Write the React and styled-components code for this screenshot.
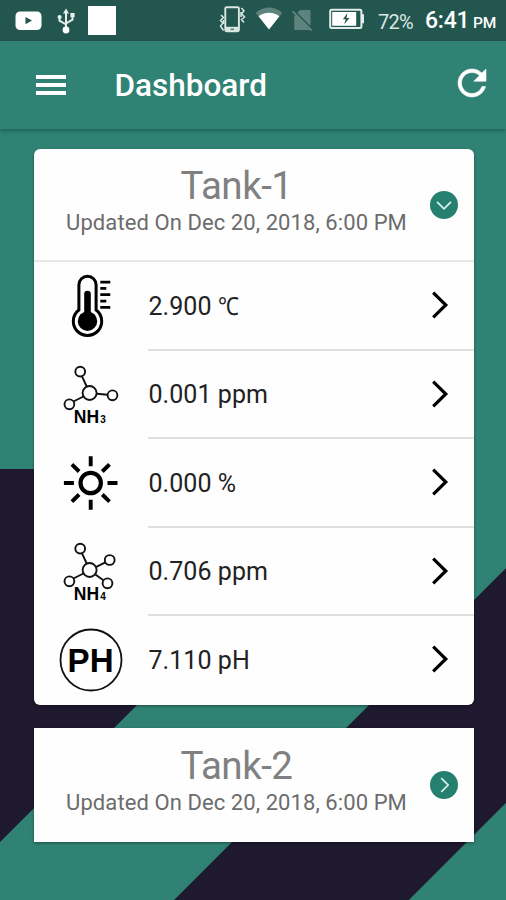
import React from "react";
import styled, { createGlobalStyle } from "styled-components";

const tanks = [
  {
    name: "Tank-1",
    updated: "Updated On Dec 20, 2018, 6:00 PM",
    open: true,
    readings: [
      { icon: "temp", value: "2.900", unit: "℃" },
      { icon: "nh3", value: "0.001", unit: "ppm" },
      { icon: "light", value: "0.000", unit: "%" },
      { icon: "nh4", value: "0.706", unit: "ppm" },
      { icon: "ph", value: "7.110", unit: "pH" },
    ],
  },
  {
    name: "Tank-2",
    updated: "Updated On Dec 20, 2018, 6:00 PM",
    open: false,
    readings: [],
  },
];

function App() {
  return (
    <>
      <GlobalStyle />
      <Screen>
        <StatusBar />
        <AppBar>
          <MenuButton aria-label="Menu">
            <span />
            <span />
            <span />
          </MenuButton>
          <Heading>Dashboard</Heading>
          <RefreshButton aria-label="Refresh">
            <svg width="42" height="42" viewBox="0 0 24 24">
              <path
                fill="#fff"
                stroke="#fff"
                strokeWidth="0.3"
                d="M17.65 6.35C16.2 4.9 14.21 4 12 4c-4.42 0-7.99 3.58-7.99 8s3.57 8 7.99 8c3.73 0 6.84-2.55 7.73-6h-2.08c-.82 2.33-3.04 4-5.65 4-3.31 0-6-2.69-6-6s2.69-6 6-6c1.66 0 3.14.69 4.22 1.78L13 11h7V4l-2.35 2.35z"
              />
            </svg>
          </RefreshButton>
        </AppBar>
        <TankList>
          {tanks.map((tank) => (
            <Tank key={tank.name} tank={tank} />
          ))}
        </TankList>
      </Screen>
    </>
  );
}

export default App;

const Tank = ({ tank }) => (
  <Card $open={tank.open}>
    <CardHeader $open={tank.open}>
      <Titles>
        <TankName>{tank.name}</TankName>
        <Updated>{tank.updated}</Updated>
      </Titles>
      <Toggle aria-label="Toggle">
        <svg width="28" height="28" viewBox="0 0 28 28" fill="none" stroke="#d9f3ec" strokeWidth="1.7">
          {tank.open ? <path d="M7 10.8l7 7 7-7" /> : <path d="M11.3 7.2l6.8 6.8-6.8 6.8" />}
        </svg>
      </Toggle>
    </CardHeader>
    {tank.open &&
      tank.readings.map((reading) => (
        <Row key={reading.icon}>
          <IconCell>
            <ReadingIcon name={reading.icon} />
          </IconCell>
          <RowBody>
            <Value>
              {reading.value} <Unit $narrow={reading.unit === "℃"}>{reading.unit}</Unit>
            </Value>
            <svg width="20" height="30" viewBox="0 0 20 30" fill="none" stroke="#000" strokeWidth="3.2">
              <path d="M3.2 2.6L15.8 15 3.2 27.4" />
            </svg>
          </RowBody>
        </Row>
      ))}
  </Card>
);

const StatusBar = () => (
  <Status>
    {/* notifications */}
    <YoutubeIcon width="27" height="20" viewBox="0 0 27 20">
      <rect x="0.5" y="0.5" width="26" height="18.5" rx="4.5" fill="#fff" />
      <path d="M10.5 6l6.5 3.6-6.5 3.6z" fill="#22564e" />
    </YoutubeIcon>
    <UsbIcon width="18" height="26" viewBox="0 0 18 26" fill="none" stroke="#e6efed" strokeWidth="2">
      <path d="M9 5v17M2.5 9.5v3.2L9 16.5M15.5 7v4.7L9 15.5" />
      <path d="M9 0.5l3 5H6z" fill="#e6efed" stroke="none" />
      <circle cx="9" cy="22" r="3.4" fill="#fff" stroke="none" />
      <circle cx="2.6" cy="9" r="2.1" fill="#e6efed" stroke="none" />
      <rect x="13.4" y="5" width="4.2" height="4.2" fill="#e6efed" stroke="none" />
    </UsbIcon>
    <WhiteSquare />
    <Spacer />
    {/* system */}
    <VibrateIcon width="27" height="27" viewBox="0 0 27 27" fill="none" stroke="#dbe7e4">
      <rect x="6.3" y="1.3" width="13.6" height="24" rx="1.2" strokeWidth="1.9" />
      <path d="M6.5 22.8h13.2" strokeWidth="4" />
      <path d="M11.5 23.2h3.5" stroke="#22564e" strokeWidth="1" />
      <path d="M2 9l2.5 2.5L1.5 14.5 4 17l-2.5 3 3 4.5M4.5 14v4M22.5 2l2.5 3-2.5 2.5L25.5 11l-3 2.5 2.5 3M22 6v5" strokeWidth="1.5" />
    </VibrateIcon>
    <WifiIcon width="28" height="23" viewBox="0 0 28 23">
      <path d="M14 22.5L0.8 6C4.5 2.6 9 0.6 14 0.6s9.5 2 13.2 5.4z" fill="#5d837c" />
      <path d="M14 22.5L3.6 9.3C6.5 7 10 5.7 14 5.7s7.5 1.3 10.4 3.6z" fill="#fff" />
    </WifiIcon>
    <SimIcon width="22" height="24" viewBox="0 0 22 24">
      <path d="M8 2h9.2c.8 0 1.3.5 1.3 1.3V22H3.5c-.8 0-1.3-.5-1.3-1.3V8z" fill="#5d837c" />
      <path d="M2 3l18 18" stroke="#22564e" strokeWidth="2" />
      <path d="M0.5 3.2l19.3 19.3" stroke="#5d837c" strokeWidth="1.8" />
    </SimIcon>
    <BatteryIcon width="36" height="22" viewBox="0 0 36 22">
      <rect x="1.2" y="1.7" width="31.2" height="18.2" rx="1.5" fill="none" stroke="#e3ecea" strokeWidth="2" />
      <path d="M33 6.2h2v9h-2z" fill="#e3ecea" />
      <rect x="3.2" y="4" width="24" height="13.8" fill="#fff" />
      <path d="M18.5 5l-4.6 6.3h2.8l-1.5 5 5.3-6.4h-3z" fill="#22564e" />
    </BatteryIcon>
    <Percent>72%</Percent>
    <Clock>
      <span>6:41</span>
      <small>PM</small>
    </Clock>
  </Status>
);

const ReadingIcon = ({ name }) => {
  switch (name) {
    case "temp":
      return (
        <svg width="64" height="64" viewBox="0 0 64 64">
          <path
            d="M19.9 36V10.8a8.6 8.6 0 0 1 17.2 0V36a14.2 14.2 0 1 1-17.2 0z"
            fill="none"
            stroke="#000"
            strokeWidth="3"
          />
          <path d="M28.5 20v27" stroke="#000" strokeWidth="6.6" strokeLinecap="round" />
          <circle cx="28.5" cy="47.2" r="9.7" />
          <path d="M41.3 8.2h10M41.3 14.3h6M41.3 20.6h10M41.3 27.2h6M41.3 33.4h10" stroke="#000" strokeWidth="2.8" />
        </svg>
      );
    case "nh3":
    case "nh4":
      return (
        <svg width="66" height="70" viewBox="0 -3 66 70">
          <g fill="none" stroke="#111" strokeWidth="1.9">
            <circle cx="30.6" cy="31" r="7" />
            <circle cx="21.2" cy="9.6" r="4.9" />
            <circle cx="10.4" cy="42.3" r="4.9" />
            <path d="M23 14.3l4.7 10.2M14.4 39.5l10-5" />
            {name === "nh3" ? (
              <>
                <circle cx="53.5" cy="33.3" r="4.9" />
                <path d="M37.6 31.8l11.1.9" />
              </>
            ) : (
              <>
                <circle cx="50.7" cy="21" r="4.9" />
                <circle cx="48.5" cy="44.3" r="4.9" />
                <path d="M36.8 28.1l9.5-4.8M36.4 35.5l8 5.8" />
              </>
            )}
          </g>
          <text
            x="14.8"
            y="60.8"
            fontFamily="Liberation Sans, sans-serif"
            fontWeight="700"
            fontSize="17.5"
          >
            NH
          </text>
          <text x="41.2" y="61.3" fontFamily="Liberation Sans, sans-serif" fontWeight="700" fontSize="10">
            {name === "nh3" ? "3" : "4"}
          </text>
        </svg>
      );
    case "light":
      return (
        <svg width="64" height="64" viewBox="0 -1 64 64" fill="none" stroke="#000">
          <circle cx="31.7" cy="32" r="10.2" strokeWidth="4.2" />
          <path
            d="M31.7 5.2v10M31.7 48.8v10M4.9 32h10M48.5 32h10M12.9 13.3l7.2 7.2M43.3 43.5l7.2 7.2M12.9 50.7l7.2-7.2M43.3 20.5l7.2-7.2"
            strokeWidth="3.9"
          />
        </svg>
      );
    default:
      return (
        <svg width="64" height="66" viewBox="0 -2 64 66">
          <circle cx="32" cy="32" r="30.5" fill="none" stroke="#111" strokeWidth="1.8" />
          <text
            x="8.6"
            y="44"
            fontFamily="Liberation Sans, sans-serif"
            fontWeight="700"
            fontSize="33.5"
            textLength="46"
            lengthAdjust="spacingAndGlyphs"
          >
            PH
          </text>
        </svg>
      );
  }
};

const GlobalStyle = createGlobalStyle`
  * {
    box-sizing: border-box;
  }
  body {
    margin: 0;
    font-family: Roboto, "Liberation Sans", sans-serif;
  }
  svg {
    display: block;
    flex-shrink: 0;
  }
`;

const Screen = styled.div`
  width: 506px;
  height: 900px;
  overflow: hidden;
  display: flex;
  flex-direction: column;
  background:
    linear-gradient(#308374, #308374) 0 0 / 100% 469px no-repeat,
    linear-gradient(
      135deg,
      #1e192f 595px,
      #308374 596px,
      #308374 759px,
      #1e192f 760px,
      #1e192f 925px,
      #308374 926px
    );
`;

const Status = styled.div`
  height: 41px;
  flex-shrink: 0;
  display: flex;
  align-items: flex-start;
  background: #22564e;
  color: #fff;
`;

const YoutubeIcon = styled.svg`
  margin: 11px 0 0 15px;
`;

const UsbIcon = styled.svg`
  margin: 8px 0 0 15px;
`;

const WhiteSquare = styled.span`
  width: 28px;
  height: 29px;
  margin: 6px 0 0 13px;
  background: #fff;
`;

const Spacer = styled.div`
  flex: 1;
`;

const VibrateIcon = styled.svg`
  margin: 6px 9px 0 0;
`;

const WifiIcon = styled.svg`
  margin: 7px 9px 0 0;
`;

const SimIcon = styled.svg`
  margin: 8px 15px 0 0;
`;

const BatteryIcon = styled.svg`
  margin: 8px 13px 0 0;
`;

const Percent = styled.span`
  width: 36px;
  margin: 10px 11px 0 0;
  font-size: 20px;
  line-height: 24px;
  letter-spacing: -0.7px;
  white-space: nowrap;
  color: #dbe6e4;
`;

const Clock = styled.span`
  width: 71px;
  margin: 7px 10px 0 0;
  display: flex;
  align-items: baseline;
  justify-content: space-between;
  font-size: 23px;
  line-height: 28px;
  font-weight: 500;
  letter-spacing: -0.2px;
  white-space: nowrap;
  small {
    font-size: 15.5px;
  }
`;

const AppBar = styled.header`
  height: 88px;
  flex-shrink: 0;
  display: flex;
  align-items: center;
  padding: 0 13px 0 36px;
  background: #308374;
  box-shadow: 0 2px 4px rgba(0, 50, 40, 0.4);
`;

const MenuButton = styled.button`
  width: 30px;
  padding: 0;
  border: none;
  background: none;
  display: flex;
  flex-direction: column;
  gap: 4px;
  span {
    height: 4px;
    background: #fff;
  }
`;

const Heading = styled.h1`
  flex: 1;
  margin: 2px 0 0 48.5px;
  font-size: 31.5px;
  line-height: 36px;
  font-weight: 500;
  color: #fff;
`;

const RefreshButton = styled.button`
  padding: 0;
  margin-bottom: 4px;
  border: none;
  background: none;
`;

const TankList = styled.main`
  padding: 19.5px 32px 0 33.5px;
  display: flex;
  flex-direction: column;
  gap: 23px;
`;

const Card = styled.section`
  background: #fefefe;
  border-radius: ${({ $open }) => ($open ? "6px" : "0")};
  box-shadow: 0 1px 3px rgba(0, 0, 0, 0.4);
  padding-bottom: ${({ $open }) => ($open ? "2px" : "0")};
`;

const CardHeader = styled.div`
  height: ${({ $open }) => ($open ? "111.5px" : "114px")};
  display: flex;
  padding: ${({ $open }) => ($open ? "0" : "1px")} 16px 0 32.5px;
`;

const Titles = styled.div`
  width: 341px;
  padding-top: 14px;
  text-align: center;
  white-space: nowrap;
`;

const TankName = styled.h2`
  margin: 0;
  font-size: 38.5px;
  line-height: 46px;
  letter-spacing: -0.5px;
  font-weight: 400;
  color: #808080;
`;

const Updated = styled.p`
  margin: 0;
  font-size: 22px;
  line-height: 28px;
  letter-spacing: 0.08px;
  color: #6c6c6c;
`;

const Toggle = styled.button`
  width: 28px;
  height: 28px;
  margin: 42px 0 0 auto;
  padding: 0;
  border: none;
  border-radius: 50%;
  background: #26806f;
`;

const Row = styled.div`
  height: 88.5px;
  display: flex;
  &:nth-child(2) {
    border-top: 2px solid #e6e6e6;
  }
`;

const IconCell = styled.div`
  width: 114px;
  display: flex;
  align-items: center;
  padding: 2px 0 0 25px;
`;

const RowBody = styled.div`
  flex: 1;
  display: flex;
  align-items: center;
  justify-content: space-between;
  padding-right: 24px;
  ${Row}:nth-child(n + 3) & {
    border-top: 2px solid #e0e0e0;
  }
`;

const Value = styled.span`
  padding: 3px 0 0 1px;
  font-size: 25px;
  line-height: 30px;
  letter-spacing: 0.05px;
  color: #222;
`;

const Unit = styled.span`
  display: inline-block;
  transform-origin: left;
  transform: ${({ $narrow }) => ($narrow ? "scaleX(0.84)" : "none")};
`;
